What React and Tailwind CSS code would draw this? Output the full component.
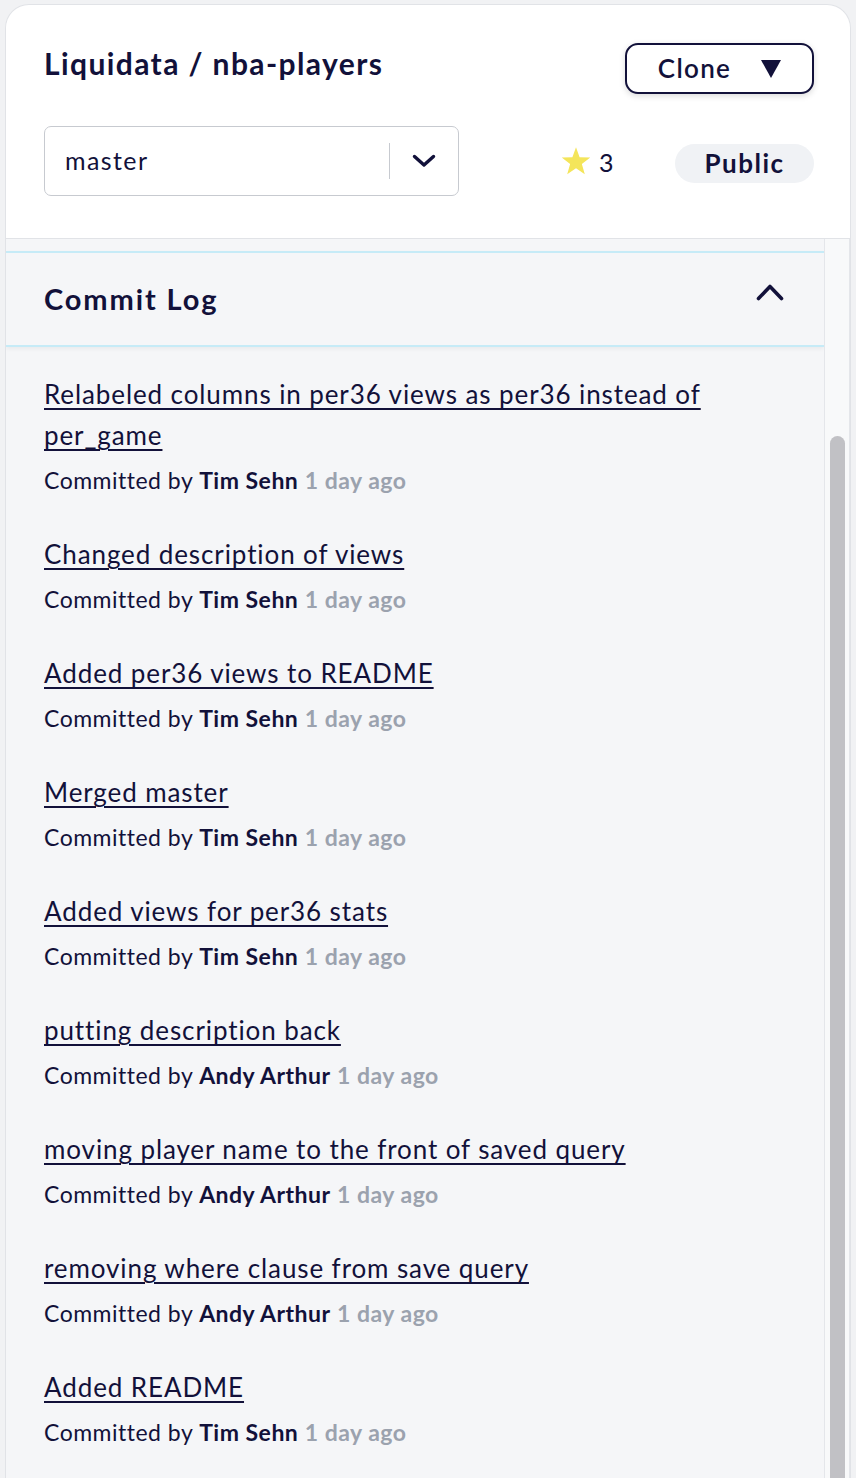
import React from "react";

const commits = [
  { title: "Relabeled columns in per36 views as per36 instead of per_game", author: "Tim Sehn" },
  { title: "Changed description of views", author: "Tim Sehn" },
  { title: "Added per36 views to README", author: "Tim Sehn" },
  { title: "Merged master", author: "Tim Sehn" },
  { title: "Added views for per36 stats", author: "Tim Sehn" },
  { title: "putting description back", author: "Andy Arthur" },
  { title: "moving player name to the front of saved query", author: "Andy Arthur" },
  { title: "removing where clause from save query", author: "Andy Arthur" },
  { title: "Added README", author: "Tim Sehn" },
];

function ChevronDown() {
  return (
    <svg width="24" height="14" viewBox="0 0 24 14" fill="none">
      <path d="M2.5 2.5 L12 11 L21.5 2.5" stroke="#12113a" strokeWidth="3.4" strokeLinecap="round" strokeLinejoin="round" />
    </svg>
  );
}

function ChevronUp() {
  return (
    <svg width="28" height="18" viewBox="0 0 28 18" fill="none">
      <path d="M2.5 15.5 L14 3.5 L25.5 15.5" stroke="#12113a" strokeWidth="3.6" strokeLinecap="round" strokeLinejoin="round" />
    </svg>
  );
}

function Star() {
  return (
    <svg width="32" height="31" viewBox="0 0 24 23">
      <path d="M12 0.8 L14.7 8.3 L22.7 8.5 L16.4 13.4 L18.6 21.1 L12 16.6 L5.4 21.1 L7.6 13.4 L1.3 8.5 L9.3 8.3 Z" fill="#f4e55a" />
    </svg>
  );
}

export default function App() {
  return (
    <div className="min-h-screen bg-[#f1f2f4] pt-[4px] px-[5px] [font-family:Lato,'Noto_Sans',sans-serif] text-[#12113a]">
      <div className="h-[1474px] bg-white border border-[#e1e3e7] border-b-0 rounded-t-[24px] flex flex-col overflow-hidden">
        {/* Header */}
        <div className="pl-[38px] pr-[36px] pt-[38px] pb-[42px] border-b border-[#e1e3e7]">
          <div className="flex justify-between items-start">
            <h1 className="text-[30px] leading-[40px] font-bold tracking-[1.4px]">Liquidata / nba-players</h1>
            <button className="w-[189px] h-[51px] border-2 border-[#12113a] rounded-[13px] flex items-center justify-center gap-[30px] shadow-[0_2px_6px_rgba(0,0,0,0.15)] bg-white">
              <span className="text-[26px] font-semibold tracking-[1.3px]">Clone</span>
              <svg width="20" height="18" viewBox="0 0 20 18">
                <polygon points="0,0 20,0 10,18" fill="#12113a" />
              </svg>
            </button>
          </div>
          <div className="flex items-center mt-[32px]">
            <div className="w-[415px] h-[70px] border border-[#c7cad0] rounded-[7px] flex items-center pl-[20px] pr-[22px]">
              <span className="flex-1 text-[25px] tracking-[1.4px]">master</span>
              <div className="w-px h-[36px] bg-[#c7cad0] mr-[22px]" />
              <ChevronDown />
            </div>
            <div className="flex items-center ml-[101px] gap-[7px]">
              <Star />
              <span className="text-[25px] mt-[4px]">3</span>
            </div>
            <div className="ml-auto mt-[4px] h-[39px] w-[139px] rounded-full bg-[#f0f2f5] flex items-center justify-center">
              <span className="text-[26px] font-bold tracking-[1.5px]">Public</span>
            </div>
          </div>
        </div>
        {/* Body */}
        <div className="flex flex-1 min-h-0">
          <div className="flex-1 bg-[#f5f6f8] pt-[12px]">
            <div className="border-y-2 border-[#c6ebf7] h-[96px] flex items-center justify-between pl-[38px] pr-[40px] shadow-[0_2px_4px_rgba(0,0,0,0.05)]">
              <h2 className="text-[29px] font-bold tracking-[1.9px]">Commit Log</h2>
              <div className="-mt-[14px]"><ChevronUp /></div>
            </div>
            <div className="pl-[38px] pt-[27px] flex flex-col gap-[38px]">
              {commits.map((c, i) => (
                <div key={i} className="max-w-[720px]">
                  <a href="#" className="block text-[26px] leading-[41px] tracking-[0.9px] underline underline-offset-[4px] decoration-[1.5px]">
                    {c.title}
                  </a>
                  <div className="mt-[8px] text-[23px] leading-[32px] tracking-[0.5px]">
                    Committed by <span className="font-bold">{c.author}</span>{" "}
                    <span className="font-bold text-[#9ba2ae]">1 day ago</span>
                  </div>
                </div>
              ))}
            </div>
          </div>
          {/* scrollbar */}
          <div className="w-[26px] border-l border-[#e4e6ea] border-r bg-[#f8f9fa] pl-[5px] pr-[4px] flex flex-col">
            <div className="h-[197px]" />
            <div className="flex-1 bg-[#c1c1c5] rounded-t-full" />
          </div>
        </div>
      </div>
    </div>
  );
}
